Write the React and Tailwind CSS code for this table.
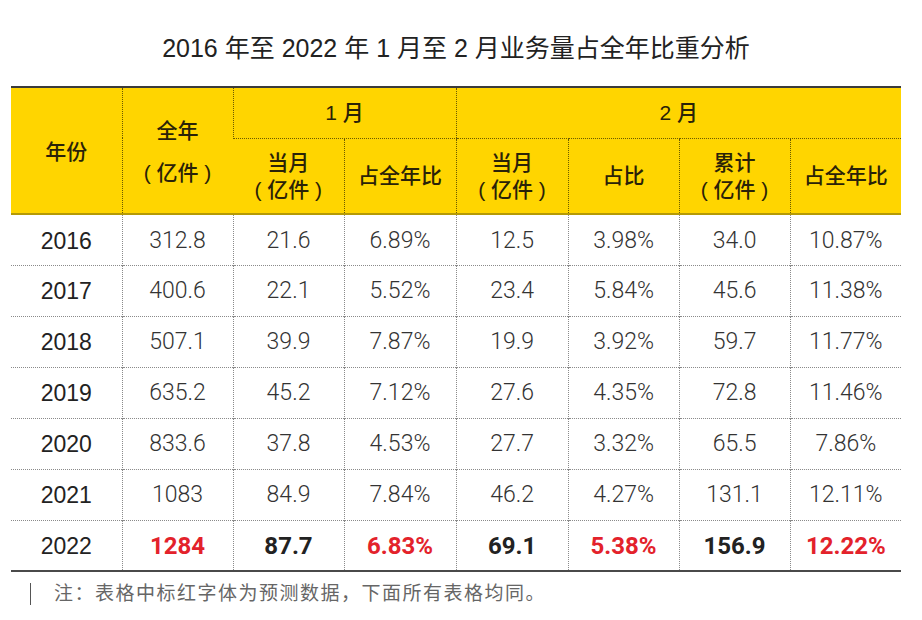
const rows = [
  ['2016', '312.8', '21.6', '6.89%', '12.5', '3.98%', '34.0', '10.87%'],
  ['2017', '400.6', '22.1', '5.52%', '23.4', '5.84%', '45.6', '11.38%'],
  ['2018', '507.1', '39.9', '7.87%', '19.9', '3.92%', '59.7', '11.77%'],
  ['2019', '635.2', '45.2', '7.12%', '27.6', '4.35%', '72.8', '11.46%'],
  ['2020', '833.6', '37.8', '4.53%', '27.7', '3.32%', '65.5', '7.86%'],
  ['2021', '1083', '84.9', '7.84%', '46.2', '4.27%', '131.1', '12.11%'],
];

const last = [
  { v: '2022', c: 'text-[#222] font-normal text-[23px] font-["Liberation_Sans"]' },
  { v: '1284', c: 'text-[#e3222b] font-bold' },
  { v: '87.7', c: 'text-[#222] font-bold' },
  { v: '6.83%', c: 'text-[#e3222b] font-bold' },
  { v: '69.1', c: 'text-[#222] font-bold' },
  { v: '5.38%', c: 'text-[#e3222b] font-bold' },
  { v: '156.9', c: 'text-[#222] font-bold' },
  { v: '12.22%', c: 'text-[#e3222b] font-bold' },
];

const font = { fontFamily: '"Liberation Sans", "Noto Sans CJK SC", sans-serif' };
const num = { fontFamily: 'Roboto, "Liberation Sans", sans-serif' };

export default function App() {
  const hd = 'border-l border-dotted border-l-[#6b5a00] first:border-l-0';
  return (
    <div className="w-[922px] h-[620px] bg-white overflow-hidden" style={font}>
      <h1 className="pt-[33px] h-[86px] text-center text-[25px] leading-[30px] text-[#222] pr-[10px]">
        2016 年至 2022 年 1 月至 2 月业务量占全年比重分析
      </h1>

      <table className="ml-[11px] w-[890px] table-fixed border-collapse">
        <colgroup>
          <col className="w-[111px]" />
          <col className="w-[111px]" />
          <col className="w-[111px]" />
          <col className="w-[112px]" />
          <col className="w-[112px]" />
          <col className="w-[111px]" />
          <col className="w-[111px]" />
          <col className="w-[111px]" />
        </colgroup>
        <thead className="bg-[#ffd500] text-[#2a2208] text-[21px] font-medium">
          <tr className="h-[51px] border-t-2 border-t-[#3b3b3b]">
            <th rowSpan={2} className="font-medium align-middle pt-[2px]">年份</th>
            <th rowSpan={2} className={`${hd} font-medium align-middle`}>
              <div className="flex flex-col items-center gap-[14px] pt-[2px]">
                <span className="leading-[28px]">全年</span>
                <span className="leading-[28px]">( 亿件 )</span>
              </div>
            </th>
            <th colSpan={2} className={`${hd} font-medium border-b border-b-[#6b5a00] border-dotted`}>
              1 月
            </th>
            <th colSpan={4} className={`${hd} font-medium border-b border-b-[#6b5a00] border-dotted`}>
              2 月
            </th>
          </tr>
          <tr className="h-[76px] border-b-2 border-b-[#b59a06]">
            <th className={`${hd} font-medium leading-[27px]`}>
              当月
              <br />( 亿件 )
            </th>
            <th className={`${hd} font-medium`}>占全年比</th>
            <th className={`${hd} font-medium leading-[27px]`}>
              当月
              <br />( 亿件 )
            </th>
            <th className={`${hd} font-medium`}>占比</th>
            <th className={`${hd} font-medium leading-[27px]`}>
              累计
              <br />( 亿件 )
            </th>
            <th className={`${hd} font-medium`}>占全年比</th>
          </tr>
        </thead>
        <tbody className="text-[23px]" style={num}>
          {rows.map((r) => (
            <tr key={r[0]} className="h-[51px] border-b border-dotted border-b-[#8a8a8a]">
              {r.map((v, i) => (
                <td
                  key={i}
                  className={`text-center pt-[2px] border-l border-dotted border-l-[#8a8a8a] first:border-l-0 ${
                    i === 0 ? 'text-[#222] font-normal font-["Liberation_Sans"]' : 'text-[#333] font-light'
                  }`}
                >
                  {v}
                </td>
              ))}
            </tr>
          ))}
          <tr className="h-[51px] border-b-2 border-b-[#4a4a4a] text-[24px]">
            {last.map((c, i) => (
              <td key={i} className={`text-center pt-[2px] border-l border-dotted border-l-[#8a8a8a] first:border-l-0 ${c.c}`}>
                {c.v}
              </td>
            ))}
          </tr>
        </tbody>
      </table>

      <div className="flex items-center mt-[10px] ml-[30px] h-[24px]">
        <div className="w-px h-[22px] bg-[#555]" />
        <p className="ml-[23px] text-[19px] tracking-[1.5px] text-[#666] leading-[24px]">
          注：表格中标红字体为预测数据，下面所有表格均同。
        </p>
      </div>
    </div>
  );
}
